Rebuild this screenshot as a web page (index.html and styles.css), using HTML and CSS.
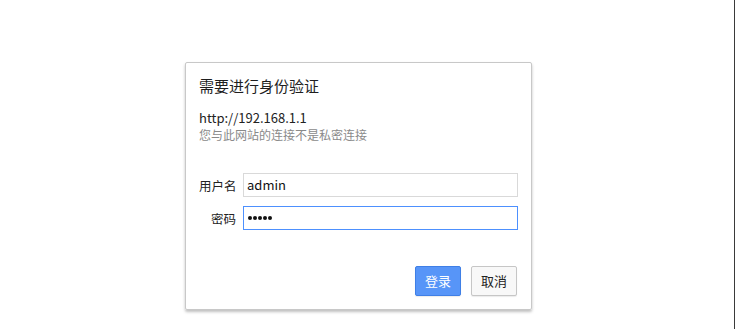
FILE: index.html
```html
<!DOCTYPE html>
<html lang="zh-CN">
<head>
<meta charset="utf-8">
<link rel="stylesheet" href="styles.css">
</head>
<body>
<div class="page">
  <div class="dialog">
    <div class="title">需要进行身份验证</div>
    <div class="url">http://192.168.1.1</div>
    <div class="note">您与此网站的连接不是私密连接</div>
    <div class="form">
      <div class="row">
        <label class="label">用户名</label>
        <div class="input">admin</div>
      </div>
      <div class="row">
        <label class="label">密码</label>
        <div class="input focus"><span class="dots"><i></i><i></i><i></i><i></i><i></i></span></div>
      </div>
    </div>
    <div class="buttons">
      <div class="btn primary">登录</div>
      <div class="btn">取消</div>
    </div>
  </div>
</div>
</body>
</html>
```
FILE: styles.css
```css
html, body {
  margin: 0;
  padding: 0;
  background: #fff;
}
body {
  font-family: "Noto Sans CJK SC", "Noto Sans", sans-serif;
  color: #222;
}
.page {
  width: 735px;
  height: 329px;
  border-right: 1px solid #3a3a3a;
  overflow: hidden;
  padding-top: 62px;
  box-sizing: border-box;
}
.dialog {
  margin-left: 185px;
  width: 347px;
  height: 248px;
  box-sizing: border-box;
  border: 1px solid #c8c8c8;
  border-radius: 2px;
  box-shadow: 0 2px 3px rgba(0,0,0,0.25);
  padding: 13px 13px 13px 13px;
  display: flex;
  flex-direction: column;
}
.title {
  font-size: 15px;
  line-height: 20px;
  color: #1e1e1e;
}
.url {
  margin-top: 13px;
  font-size: 13px;
  line-height: 17px;
  color: #222;
}
.note {
  margin-top: 1px;
  font-size: 12px;
  line-height: 16px;
  color: #8a8a8a;
}
.form {
  margin-top: 30px;
  display: flex;
  flex-direction: column;
  gap: 9px;
}
.row {
  display: flex;
  align-items: center;
}
.label {
  width: 37px;
  margin-right: 7px;
  text-align: right;
  white-space: nowrap;
  font-size: 12.5px;
  color: #222;
  flex: none;
}
.input {
  width: 276px;
  height: 24px;
  box-sizing: border-box;
  border: 1px solid #d9d9d9;
  padding: 0 0 0 3px;
  font-size: 13px;
  line-height: 22px;
  color: #111;
  display: flex;
  align-items: center;
}
.input.focus {
  border-color: #4d90fe;
  padding-left: 4px;
}
.dots {
  display: flex;
  gap: 1px;
}
.dots i {
  display: block;
  width: 4px;
  height: 4px;
  border-radius: 50%;
  background: #111;
}
.buttons {
  margin-top: 36px;
  display: flex;
  justify-content: flex-end;
  gap: 10px;
  padding-right: 1px;
}
.btn {
  width: 46px;
  height: 30px;
  box-sizing: border-box;
  border: 1px solid #c6c6c6;
  border-radius: 2px;
  background: #f8f8f8;
  font-size: 13px;
  line-height: 28px;
  text-align: center;
  color: #222;
  box-shadow: 0 1px 1px rgba(0,0,0,0.08);
}
.btn.primary {
  background: #5795f8;
  border-color: #3f7fe6;
  color: #fff;
}
```
